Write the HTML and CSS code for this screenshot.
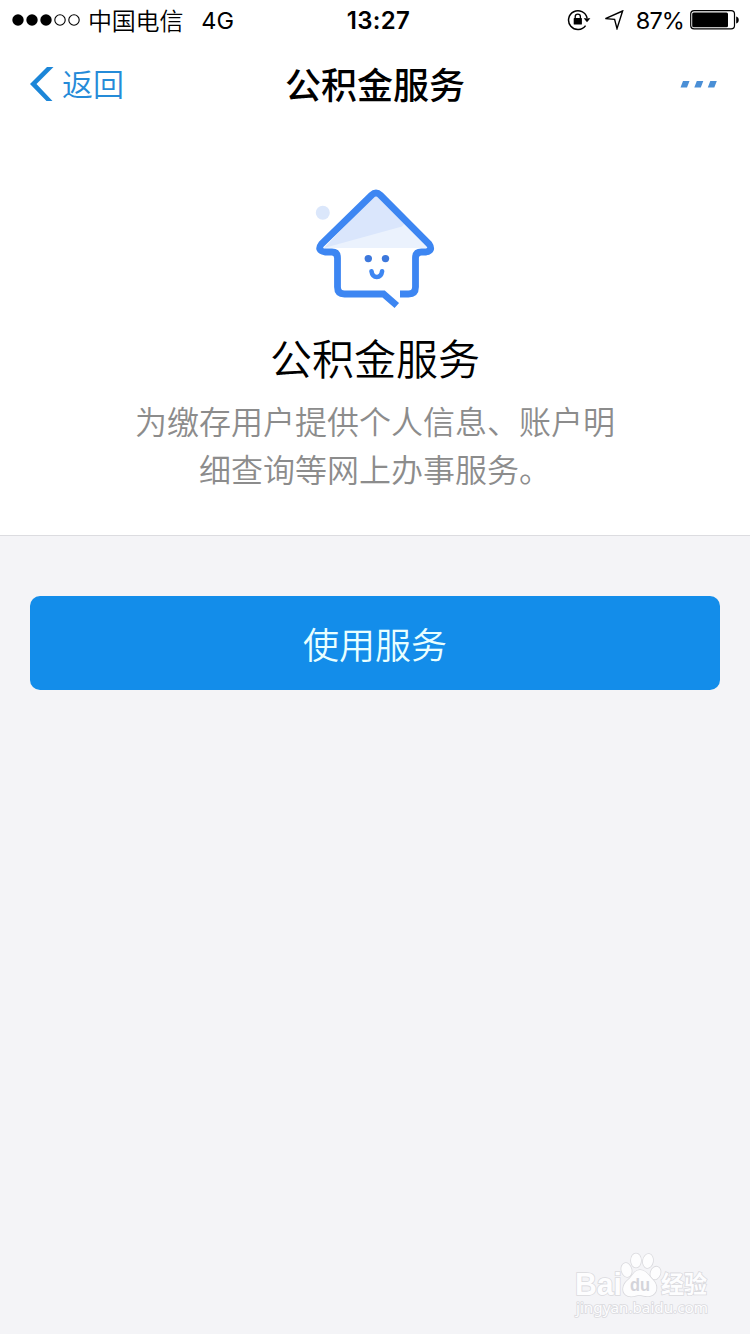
FILE: index.html
```html
<!DOCTYPE html>
<html lang="zh-CN">
<head>
<meta charset="utf-8">
<title>公积金服务</title>
<link rel="stylesheet" href="styles.css">
</head>
<body>
<div class="screen">
  <header class="top">
    <div class="status">
      <div class="status-left">
        <svg class="signal" width="68" height="12" viewBox="0 0 68 12">
          <g fill="#000"><circle cx="6" cy="6" r="5.7"/><circle cx="20" cy="6" r="5.7"/><circle cx="34" cy="6" r="5.7"/></g>
          <g fill="none" stroke="#000" stroke-width="1.1"><circle cx="48" cy="6" r="5.2"/><circle cx="62" cy="6" r="5.2"/></g>
        </svg>
        <span class="carrier">中国电信</span>
        <span class="network">4G</span>
      </div>
      <div class="clock">13:27</div>
      <div class="status-right">
        <svg class="lock" width="24" height="22" viewBox="0 0 24 22">
          <path d="M18.6 16.6A9.4 9.4 0 1 1 20.1 9" fill="none" stroke="#000" stroke-width="1.5"/>
          <path d="M16.7 9.2H23.4L20 13.2Z"/>
          <rect x="6.7" y="9.1" width="8.2" height="6.4" rx=".6"/>
          <path d="M8.2 9.5V7.7a2.6 2.6 0 0 1 5.2 0V9.5" fill="none" stroke="#000" stroke-width="1.3"/>
        </svg>
        <svg class="arrow" width="20" height="20" viewBox="0 0 20 20">
          <path d="M18.6 1L1.4 8.6L10.6 9.4L13 18.6Z" fill="none" stroke="#000" stroke-width="1.4"/>
        </svg>
        <span class="percent">87%</span>
        <svg class="battery" width="50" height="20" viewBox="0 0 50 20">
          <rect x=".7" y=".7" width="43.8" height="18.2" rx="3.4" fill="none" stroke="#000" stroke-width="1.2"/>
          <rect x="2.2" y="2.4" width="35.8" height="14.8" rx="1.5"/>
          <path d="M46.2 6.4C49.6 7 49.6 12.8 46.2 13.4Z"/>
        </svg>
      </div>
    </div>
    <nav class="nav">
      <div class="back">
        <svg class="chevron" width="24" height="36" viewBox="0 0 24 36">
          <path d="M17 1H23.500L6.500 18L22.500 35H16.500L0 18Z" fill="#1c86d8"/>
        </svg>
        <span>返回</span>
      </div>
      <h1 class="nav-title">公积金服务</h1>
      <svg class="more" width="38" height="8" viewBox="0 0 38 8" fill="#4a8fd6">
        <path d="M3 1H9.500L7 7.500H.5ZM16.800 1H23.300L20.800 7.500H14.300ZM30.300 1H36.800L34.300 7.500H27.800Z"/>
      </svg>
    </nav>
  </header>
  <section class="hero">
    <svg class="house" width="124" height="124" viewBox="313 187 124 124">
      <circle cx="322.800" cy="212.800" r="7" fill="#dbe7fb"/>
      <path d="M376 194L324 248H428Z" fill="#ebf2fd"/>
      <path d="M376 194L324 248L402 226.500L405 223Z" fill="#dae6fc"/>
      <g fill="none" stroke="#3d86f2" stroke-width="6.800">
        <path d="M396.800 305.500L383.500 294H344.500Q337.500 294 337.500 287V258Q337.500 252 332 252H325Q316.500 250.500 321.500 244L371.500 195.200Q376 190.800 380.500 195.200L429 244Q433.500 250.500 426 252H421.500Q415.500 252 415.500 258V287Q415.500 294 408.500 294H400"/>
        <path d="M371.500 271.300Q372.300 277 376.800 277Q381.300 277 382.100 271.300" stroke-width="4.600" stroke-linecap="round"/>
      </g>
      <g fill="#3d78dc"><circle cx="368.300" cy="258.600" r="3.700"/><circle cx="385.500" cy="258.600" r="3.700"/></g>
    </svg>
    <h2 class="name">公积金服务</h2>
    <p class="desc">为缴存用户提供个人信息、账户明<br>细查询等网上办事服务。</p>
  </section>
  <main class="actions">
    <button class="use">使用服务</button>
  </main>
  <footer class="footer">
    <svg class="watermark" width="140" height="72" viewBox="572 1250 140 72">
      <g fill="#fdfdfe" stroke="#dadade" stroke-width="1.600" paint-order="stroke">
        <text class="wm-brand" x="575" y="1295" textLength="47" lengthAdjust="spacingAndGlyphs">Bai</text>
        <ellipse cx="626.500" cy="1270" rx="5" ry="7" transform="rotate(-15 626.500 1270)"/>
        <ellipse cx="636" cy="1260.500" rx="5" ry="7"/>
        <ellipse cx="648" cy="1261" rx="5" ry="7" transform="rotate(10 648 1261)"/>
        <ellipse cx="655.500" cy="1273" rx="4.800" ry="6.500" transform="rotate(20 655.500 1273)"/>
        <path d="M640 1270C646 1270 649 1276 653 1280C658 1285 658 1294 650 1296C645 1297 643 1295 639.500 1295C636 1295 633 1297.500 628 1296C621 1293 622 1285 628 1280C633 1276 634 1270 640 1270Z"/>
        <text class="wm-du" x="630" y="1291" textLength="20" lengthAdjust="spacingAndGlyphs">du</text>
        <text class="wm-cn" x="661" y="1293" textLength="46" lengthAdjust="spacingAndGlyphs">经验</text>
        <text class="wm-url" x="576" y="1313" textLength="132" lengthAdjust="spacingAndGlyphs">jingyan.baidu.com</text>
      </g>
    </svg>
  </footer>
</div>
</body>
</html>
```
FILE: styles.css
```css
* { box-sizing: border-box; }

body {
  margin: 0;
  font-family: "Noto Sans CJK SC", sans-serif;
  color: #000;
}

.screen {
  width: 750px;
  height: 1334px;
  display: flex;
  flex-direction: column;
  background: #f4f4f7;
  overflow: hidden;
}

.top { background: #fff; }

.status {
  height: 40px;
  padding: 0 10px 0 12px;
  display: grid;
  grid-template-columns: 1fr auto 1fr;
  align-items: center;
}

.status-left, .status-right { display: flex; align-items: center; }
.status-right { justify-content: flex-end; }
.signal { margin-right: 8px; }
.carrier { font-size: 24px; line-height: 38px; letter-spacing: -.2px; font-weight: 350; }
.network { margin-left: 18px; padding-top: 2px; font: 23.5px/38px Inter, sans-serif; }
.clock { padding: 2px 0 0 5px; font: 600 24px/38px Inter, sans-serif; letter-spacing: .3px; }
.arrow { margin: 0 12px 0 13px; }
.percent { padding-top: 2px; font: 23.5px/38px Inter, sans-serif; letter-spacing: -.9px; }
.battery { margin-left: 6px; }

.nav {
  height: 88px;
  padding: 0 32px 0 30px;
  display: grid;
  grid-template-columns: 1fr auto 1fr;
  align-items: center;
}

.back { display: flex; align-items: center; gap: 8px; font-size: 31px; color: #258bd8; font-weight: 350; }
.back span { line-height: 42px; padding-bottom: 3px; }
.nav-title { margin: 0; padding: 0 0 3px 2px; font-size: 36px; line-height: 52px; font-weight: 500; }
.more { justify-self: end; }

.hero {
  height: 408px;
  padding-top: 59px;
  display: flex;
  flex-direction: column;
  align-items: center;
  background: #fff;
  border-bottom: 1px solid #dcdce0;
}

.name { margin: 16px 0 0; font-size: 42px; line-height: 60px; font-weight: 350; }
.desc { margin: 9px 0 0; font-size: 32px; line-height: 48px; font-weight: 350; color: #8c8c8c; text-align: center; }

.actions { padding: 60px 30px 0; display: flex; }
.use {
  flex: 1;
  height: 94px;
  border: 0;
  border-radius: 10px;
  background: #138dea;
  color: #e8ffff;
  font: 350 36px/94px "Noto Sans CJK SC", sans-serif;
  padding: 0;
}

.footer { margin-top: auto; padding: 0 38px 12px 0; display: flex; justify-content: flex-end; }
.watermark { overflow: visible; }
.wm-brand { font: 700 31px "Liberation Sans", sans-serif; }
.wm-du { font: 700 19px "Liberation Sans", sans-serif; fill: #d4d4da; stroke: none; }
.wm-cn { font: 700 24px "Noto Sans CJK SC", sans-serif; }
.wm-url { font: 15px "Noto Sans", sans-serif; }
```
